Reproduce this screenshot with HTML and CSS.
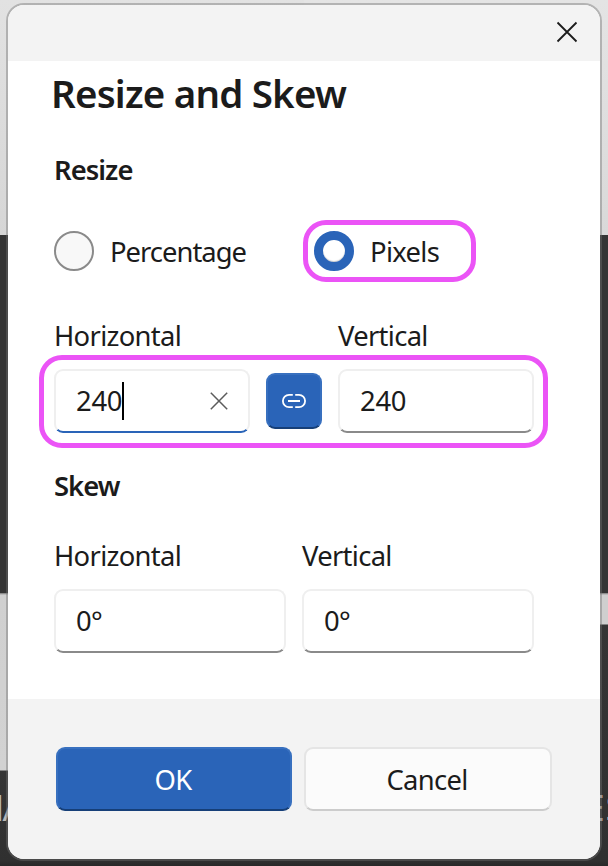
FILE: index.html
```html
<!DOCTYPE html>
<html lang="en">
<head>
<meta charset="utf-8">
<title>Resize and Skew</title>
<link rel="stylesheet" href="styles.css">
</head>
<body>
<div class="backdrop">
  <div class="strip strip-left"><span class="behind behind-left">MA</span></div>
  <div class="strip strip-right"><span class="behind behind-right">ES</span></div>
</div>
<main class="dialog">
  <header class="titlebar">
    <svg class="close" viewBox="0 0 22 22"><path d="M1.5 1.5 20.5 20.5M20.5 1.5 1.5 20.5"/></svg>
  </header>
  <section class="content">
    <h1 class="title"><span>Resize and Skew</span></h1>
    <h2 class="heading"><span>Resize</span></h2>
    <div class="radios">
      <div class="option"><span class="radio"></span><span class="option-label wide">Percentage</span></div>
      <div class="option option-marked"><span class="radio radio-on"></span><span class="option-label">Pixels</span></div>
    </div>
    <div class="labels labels-resize"><span>Horizontal</span><span>Vertical</span></div>
    <div class="size-row">
      <div class="field field-focus"><span class="number">240</span><i class="caret"></i>
        <svg class="clear" viewBox="0 0 18 18"><path d="M.8.8 17.2 17.2M17.2.8.8 17.2"/></svg>
      </div>
      <div class="link">
        <svg class="link-icon" viewBox="0 0 24 14"><path d="M10.8 .9H7a6.1 6.1 0 0 0 0 12.2h3.8M13.2 .9H17a6.1 6.1 0 0 1 0 12.2h-3.8M6 7h12"/></svg>
      </div>
      <div class="field"><span class="number">240</span></div>
    </div>
    <h2 class="heading heading-skew"><span>Skew</span></h2>
    <div class="labels labels-skew"><span>Horizontal</span><span>Vertical</span></div>
    <div class="skew-row">
      <div class="field"><span class="degrees">0°</span></div>
      <div class="field"><span class="degrees">0°</span></div>
    </div>
  </section>
  <footer class="actions">
    <div class="button primary"><span>OK</span></div>
    <div class="button"><span>Cancel</span></div>
  </footer>
</main>
</body>
</html>
```
FILE: styles.css
```css
* { box-sizing: border-box; }
body {
  position: relative;
  width: 608px;
  height: 866px;
  margin: 0;
  padding: 3px 6px 5px;
  overflow: hidden;
  background: #353535;
  color: #1b1b1b;
  font: 400 27.4px/36px "Noto Sans", "Open Sans", sans-serif;
  letter-spacing: -.68px;
}
span { white-space: nowrap; }
.backdrop {
  position: absolute;
  inset: 0;
  display: flex;
}
.strip { position: relative; width: 50%; overflow: hidden; }
.strip-left { background: linear-gradient(#e2e2e2, #d6d6d6 235px, #353535 235px, #353535 593px, #777 593px, #d0d0d0 595px, #d2d2d2 770px, #353535 771px, #303030 861px, #282828); }
.strip-right { background: linear-gradient(#e4e4e4, #d9d9d9 235px, #353535 235px, #353535 593px, #777 593px, #cfcfcf 595px, #cfcfcf 624px, #353535 625px, #303030 861px, #282828); }
.behind { position: absolute; top: 789px; color: #b8b8b8; font-size: 37px; }
.behind-left { left: -29px; letter-spacing: -2px; }
.behind-right { left: 280px; letter-spacing: 1px; }
.dialog {
  position: relative;
  display: flex;
  flex-direction: column;
  width: 596px;
  height: 858px;
  border: 2px solid rgba(112, 112, 112, .42);
  border-radius: 18px;
  background: #fff;
  background-clip: padding-box;
  overflow: hidden;
}
.titlebar { display: flex; justify-content: flex-end; height: 56px; padding: 16px 22px 0 0; background: #f3f3f3; }
.close { width: 22px; height: 22px; fill: none; stroke: #1b1b1b; stroke-width: 1.8; }
.content { height: 638px; padding: 6px 66px 0 46px; }
.title { margin: 0 0 33px -3px; font-size: 38.5px; line-height: 52px; font-weight: 600; letter-spacing: -.8px; }
.heading { margin: 0; font-size: 27.4px; line-height: 36px; font-weight: 600; letter-spacing: -.95px; }
.radios { display: flex; margin-top: 32px; height: 62px; }
.option { display: flex; align-items: center; gap: 16px; width: 249px; }
.option-label { padding-top: 2px; }
.wide { letter-spacing: -.98px; }
.option-marked { width: 173px; padding-left: 6px; border: 5px solid #eb54f6; border-radius: 23px; }
.radio { width: 40px; height: 40px; border: 2px solid #8a8a8a; border-radius: 50%; background: #f8f8f8; }
.radio-on { border: 9px solid #2a64b8; background: #fff; box-shadow: inset 0 -1px 1px rgba(0, 0, 0, .2); }
.labels { display: grid; height: 36px; }
.labels-resize { grid-template-columns: 284px 1fr; margin-top: 36px; }
.labels-skew { grid-template-columns: 248px 1fr; margin-top: 34px; }
.size-row {
  display: grid;
  grid-template-columns: 196px 56px 196px;
  gap: 16px;
  align-items: center;
  width: 509px;
  height: 93px;
  margin: 1px 0 0 -15px;
  padding: 0 0 1px 10px;
  border: 5px solid #eb54f6;
  border-radius: 23px;
}
.field {
  position: relative;
  display: flex;
  align-items: center;
  height: 64px;
  padding-left: 20px;
  border: 2px solid #efefef;
  border-bottom-color: #8a8a8a;
  border-radius: 9px;
  background: #fff;
}
.field-focus { border-bottom-color: #2a64b8; }
.number { letter-spacing: -.25px; }
.caret { width: 2px; height: 38px; margin-bottom: 1px; background: #000; }
.clear { width: 18px; height: 18px; margin: 0 20px 1px auto; fill: none; stroke: #5c5c5c; stroke-width: 1.5; }
.link {
  display: grid;
  place-items: center;
  height: 56px;
  border: 2px solid #3870bf;
  border-bottom-color: #163f78;
  border-radius: 9px;
  background: #2a64b8;
}
.link-icon { width: 24px; height: 14px; margin-bottom: 1px; fill: none; stroke: #fff; stroke-width: 1.8; }
.heading-skew { margin-top: 20px; }
.skew-row { display: grid; grid-template-columns: 232px 232px; gap: 16px; margin-top: 15px; }
.actions { display: flex; gap: 12px; flex: 1; padding: 48px 0 0 48px; background: #f3f3f3; }
.button {
  display: grid;
  place-items: center;
  width: 248px;
  height: 64px;
  padding: 2px 2px 0 0;
  border: 2px solid #e5e5e5;
  border-bottom-color: #cccccc;
  border-radius: 9px;
  background: #fbfbfb;
}
.primary { width: 236px; border-color: #3870bf; border-bottom-color: #163f78; background: #2a64b8; color: #fff; }
```
